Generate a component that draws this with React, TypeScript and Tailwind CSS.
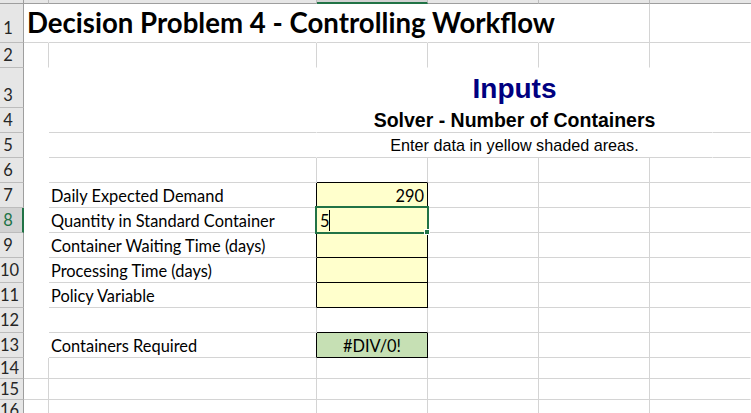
import React from "react";

// gridline / border colour classes
const GR = "border-r-[#d4d4d4]";
const GB = "border-b-[#d4d4d4]";
const KR = "border-r-black";
const KB = "border-b-black";

const wA = "w-[25px]";
const wB = "w-[268px]";
const wC = "w-[111px]";
const wF = "min-w-0 flex-1";

const calibri = "font-['Lato',sans-serif] text-[16.4px] leading-none text-black";
const arial = "font-['Liberation_Sans',Arial,sans-serif] leading-none";

type RowProps = {
  h: string;
  n: number;
  sel?: boolean;
  pb?: string;
  children?: React.ReactNode;
};

const Row: React.FC<RowProps> = ({ h, n, sel, pb = "pb-[4px]", children }) => (
  <div className={`flex shrink-0 ${h}`}>
    <div
      className={`flex w-[24px] shrink-0 items-end border-b border-b-[#bcbcbc] ${pb} ${
        sel
          ? "border-r-2 border-r-[#217346] bg-[#d2d2d2] text-[#217346]"
          : "border-r border-r-[#9e9e9e] bg-[#e6e6e6] text-[#262626]"
      }`}
    >
      <span className="w-[16px] text-center font-['Lato',sans-serif] text-[16.5px] leading-none">
        {n}
      </span>
    </div>
    {children}
  </div>
);

type CellProps = {
  w: string;
  r?: string;
  b?: string;
  bg?: string;
  cls?: string;
  children?: React.ReactNode;
};

const Cell: React.FC<CellProps> = ({
  w,
  r = "border-r-transparent",
  b = "border-b-transparent",
  bg = "",
  cls = "",
  children,
}) => (
  <div className={`relative flex shrink-0 items-end border-r border-b ${w} ${r} ${b} ${bg} ${cls}`}>
    {children}
  </div>
);

// a plain row of gridlines (rows 14+)
const GridCells = () => (
  <>
    <Cell w={wA} r={GR} b={GB} />
    <Cell w={wB} r={GR} b={GB} />
    <Cell w={wC} r={GR} b={GB} />
    <Cell w={wC} r={GR} b={GB} />
    <Cell w={wC} r={GR} b={GB} />
    <Cell w={wF} b={GB} />
  </>
);

const TailCells = () => (
  <>
    <Cell w={wC} r={GR} b={GB} />
    <Cell w={wC} r={GR} b={GB} />
    <Cell w={wF} b={GB} />
  </>
);

const InputRow = ({ n, label, value, sel }: { n: number; label: string; value?: string; sel?: boolean }) => (
  <Row h="h-[25px]" n={n} sel={sel}>
    <Cell w={wA} />
    <Cell w={wB} r={KR} b={GB} cls="pb-[3px] pl-[2px]">
      <span className={calibri}>{label}</span>
    </Cell>
    <Cell w={wC} r={KR} b={KB} bg="bg-[#ffffcc]" cls="justify-end pb-[3px] pr-[3px]">
      {value && <span className={calibri}>{value}</span>}
      {sel && (
        <>
          <span className={`${calibri} absolute bottom-[3px] left-[3px]`}>5</span>
          <span className="absolute left-[12px] top-[2px] h-[21px] w-[1px] bg-black" />
          <span className="absolute left-[-2px] top-[-2px] z-10 h-[28px] w-[114px] border-2 border-[#217346]" />
          <span className="absolute left-[107px] top-[21px] z-20 h-[6px] w-[6px] border border-white bg-[#217346]" />
        </>
      )}
    </Cell>
    <TailCells />
  </Row>
);

export default function App() {
  return (
    <div className="relative flex h-[413px] w-[751px] flex-col overflow-hidden bg-white">
      {/* column header strip (mostly scrolled off) */}
      <div className="flex h-[4px] shrink-0 bg-[#e6e6e6]">
        <div className="w-[24px] shrink-0 border-r border-b border-r-[#9e9e9e] border-b-[#9e9e9e]" />
        <div className="w-[25px] shrink-0 border-r border-b border-r-[#bcbcbc] border-b-[#9e9e9e]" />
        <div className="w-[268px] shrink-0 border-r border-b border-r-[#bcbcbc] border-b-[#9e9e9e]" />
        <div className="w-[111px] shrink-0 border-r border-b-2 border-r-[#bcbcbc] border-b-[#217346] bg-[#d2d2d2]" />
        <div className="w-[111px] shrink-0 border-r border-b border-r-[#bcbcbc] border-b-[#9e9e9e]" />
        <div className="w-[111px] shrink-0 border-r border-b border-r-[#bcbcbc] border-b-[#9e9e9e]" />
        <div className="min-w-0 flex-1 border-b border-b-[#9e9e9e]" />
      </div>

      {/* 1 */}
      <Row h="h-[39px]" n={1} pb="pb-[6px]">
        <Cell w={wA} b={GB} cls="pb-[5px] pl-[3px]">
          <span className="whitespace-nowrap font-['Lato',sans-serif] text-[27.6px] font-bold leading-none text-black">
            Decision Problem 4 - Controlling Workflow
          </span>
        </Cell>
        <Cell w={wB} b={GB} />
        <Cell w={wC} b={GB} />
        <Cell w={wC} b={GB} />
        <Cell w={wC} r={GR} b={GB} />
        <Cell w={wF} b={GB} />
      </Row>

      {/* 2 */}
      <Row h="h-[25px]" n={2}>
        <Cell w={wA} r={GR} />
        <Cell w={wB} r={GR} />
        <Cell w={wC} r={GR} />
        <Cell w={wC} r={GR} />
        <Cell w={wC} r={GR} />
        <Cell w={wF} />
      </Row>

      {/* 3 */}
      <Row h="h-[40px]" n={3}>
        <Cell w={wA} />
        <Cell w={wB} />
        <Cell w="w-[396px]" cls="justify-center pb-[4px]">
          <span className={`${arial} text-[28px] font-bold text-[#000080]`}>Inputs</span>
        </Cell>
        <Cell w={wF} />
      </Row>

      {/* 4 */}
      <Row h="h-[25px]" n={4}>
        <Cell w={wA} />
        <Cell w={wB} b={GB} />
        <Cell w="w-[396px]" b={GB} cls="justify-center pb-[2px]">
          <span className={`${arial} whitespace-nowrap text-[19.5px] font-bold text-black`}>
            Solver - Number of Containers
          </span>
        </Cell>
        <Cell w={wF} b={GB} />
      </Row>

      {/* 5 */}
      <Row h="h-[25px]" n={5}>
        <Cell w={wA} />
        <Cell w={wB} b={GB} />
        <Cell w="w-[396px]" b={GB} cls="justify-center pb-[4px]">
          <span className={`${arial} whitespace-nowrap text-[16.2px] text-black`}>
            Enter data in yellow shaded areas.
          </span>
        </Cell>
        <Cell w={wF} b={GB} />
      </Row>

      {/* 6 */}
      <Row h="h-[25px]" n={6}>
        <Cell w={wA} />
        <Cell w={wB} r={GR} b={GB} />
        <Cell w={wC} r={GR} b={KB} />
        <TailCells />
      </Row>

      <InputRow n={7} label="Daily Expected Demand" value="290" />
      <InputRow n={8} label="Quantity in Standard Container" sel />
      <InputRow n={9} label="Container Waiting Time (days)" />
      <InputRow n={10} label="Processing Time (days)" />
      <InputRow n={11} label="Policy Variable" />

      {/* 12 */}
      <Row h="h-[25px]" n={12}>
        <Cell w={wA} />
        <Cell w={wB} r={GR} b={GB} />
        <Cell w={wC} r={GR} b={KB} />
        <TailCells />
      </Row>

      {/* 13 */}
      <Row h="h-[25px]" n={13}>
        <Cell w={wA} />
        <Cell w={wB} r={KR} b={GB} cls="pb-[3px] pl-[2px]">
          <span className={calibri}>Containers Required</span>
        </Cell>
        <Cell w={wC} r={KR} b={KB} bg="bg-[#c6e0b4]" cls="justify-center pb-[3px]">
          <span className={calibri}>#DIV/0!</span>
        </Cell>
        <TailCells />
      </Row>

      <Row h="h-[21px]" n={14} pb="pb-[2px]">
        <GridCells />
      </Row>
      <Row h="h-[21px]" n={15} pb="pb-[2px]">
        <GridCells />
      </Row>
      <Row h="h-[21px]" n={16} pb="pb-[2px]">
        <GridCells />
      </Row>
    </div>
  );
}
